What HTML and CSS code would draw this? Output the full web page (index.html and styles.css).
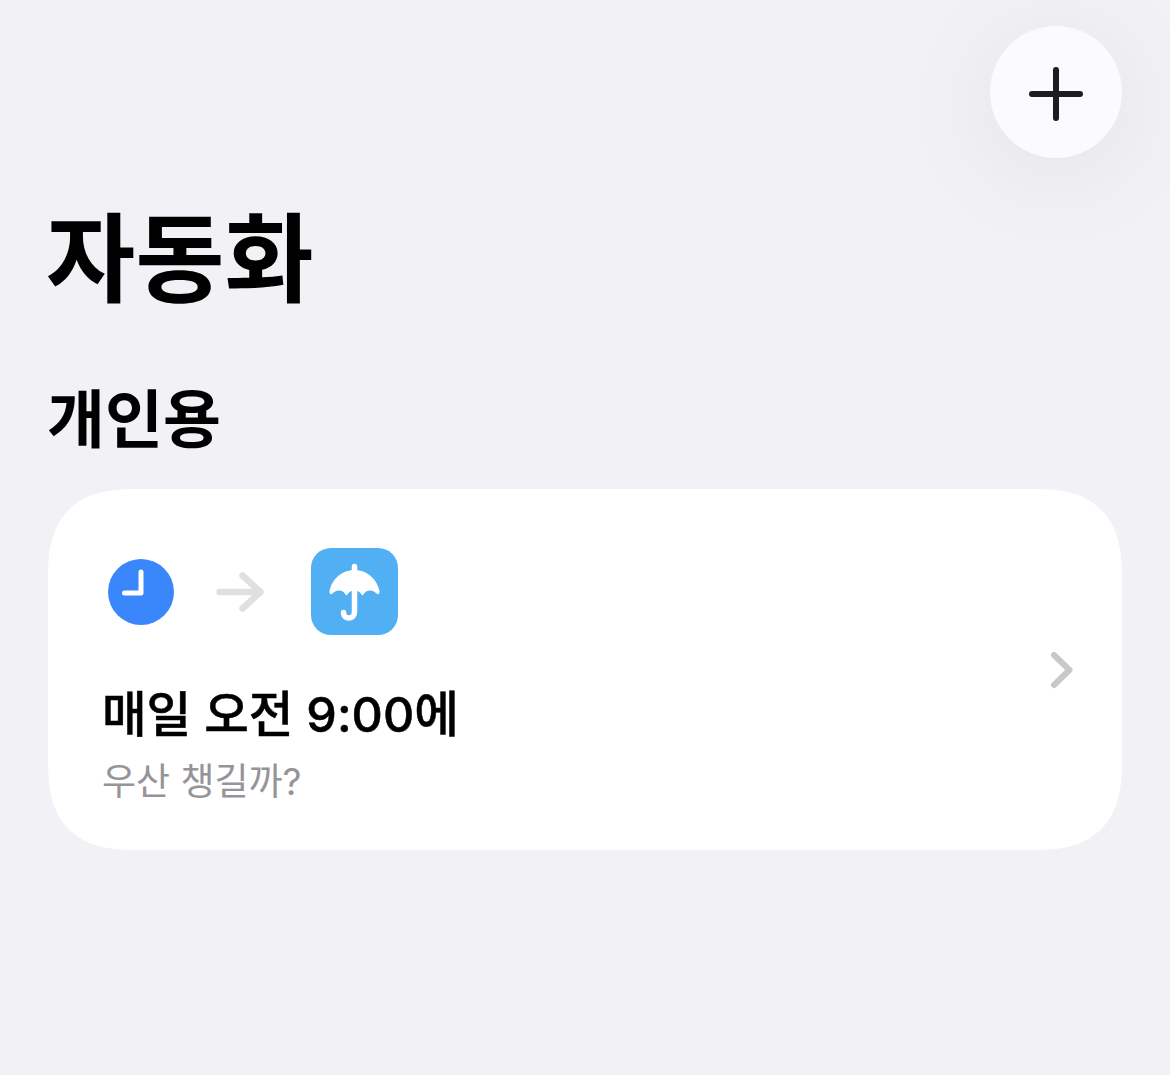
FILE: index.html

```html
<!DOCTYPE html>
<html lang="ko">
<head>
    <meta charset="UTF-8" />
    <title>자동화</title>
    <link rel="stylesheet" href="styles.css">
</head>
<body>

<div class="topbar">
  <button class="add-btn" aria-label="추가">
    <svg class="plus" width="54" height="54" viewBox="0 0 54 54">
      <path d="M27 3V51M3 27H51" fill="none" stroke="#1c1c22" stroke-width="6" stroke-linecap="round" />
    </svg>
  </button>
</div>

<h1>자동화</h1>
<h2>개인용</h2>

<div class="card">
  <div class="card-body">
    <div class="icons">
      <svg class="clock" width="66" height="66" viewBox="0 0 66 66">
        <circle cx="33" cy="33" r="33" fill="#3a86fb" />
        <path d="M33 13V34H16.500" fill="none" stroke="#fff" stroke-width="5" stroke-linecap="round" stroke-linejoin="round" />
      </svg>
      <svg class="arrow" width="50" height="40" viewBox="0 0 50 40">
        <path d="M4.500 20H45.500M27.500 3.500L45.500 20L27.500 36.500" fill="none" stroke="#e0e0e0" stroke-width="6.500" stroke-linecap="round" stroke-linejoin="round" />
      </svg>
      <svg class="umbrella" width="87" height="87" viewBox="0 0 87 87">
        <rect width="87" height="87" rx="20" fill="#50b0f3" />
        <path d="M43.500 22C56 22 66 31 68.500 43C69 46 67 47 65.500 45.500C63.500 43.500 61.500 42.500 59 42.500C56 42.500 54 44 52.500 46.500C52 47.500 51 47.500 50.500 46.500C49 44 46.500 42.500 43.500 42.500C40.500 42.500 38 44 36.500 46.500C36 47.500 35 47.500 34.500 46.500C33 44 31 42.500 28 42.500C25.500 42.500 23.500 43.500 21.500 45.500C20 47 18 46 18.500 43C21 31 31 22 43.500 22Z" fill="#fff" />
        <path d="M43.500 18.500V25M43.500 40V63.500C43.500 67.500 41.500 70 38 70C34.500 70 32.500 68 32.500 64.500" fill="none" stroke="#fff" stroke-width="5.500" stroke-linecap="round" />
      </svg>
    </div>
    <div class="card-title">매일 오전 9:00에</div>
    <div class="card-sub">우산 챙길까?</div>
  </div>
  <svg class="chevron" width="24" height="38" viewBox="0 0 24 38">
    <path d="M4 4L19.500 19L4 34" fill="none" stroke="#c8c8ca" stroke-width="6" stroke-linecap="round" stroke-linejoin="round" />
  </svg>
</div>

</body>
</html>
```

FILE: styles.css

```css
body {
  margin: 0;
  padding: 26px 48px 0 48px;
  background: #f1f1f6;
  color: #000;
  font-family: "Inter", "Noto Sans CJK KR", "Liberation Sans", sans-serif;
  overflow: hidden;
}
.topbar {
  display: flex;
  justify-content: flex-end;
}
.add-btn {
  display: flex;
  align-items: center;
  justify-content: center;
  width: 132px;
  height: 132px;
  padding: 0;
  border: none;
  border-radius: 50%;
  background: #fbfbfe;
  box-shadow: 0 14px 110px rgba(0, 0, 0, 0.075);
}
.plus {
  margin-top: 4px;
}
h1 {
  margin: 37px 0 0 -2px;
  font-size: 97px;
  line-height: 128px;
  font-weight: 700;
}
h2 {
  margin: 52px 0 0 -1px;
  font-size: 63px;
  line-height: 88px;
  font-weight: 700;
}
.card {
  display: flex;
  align-items: center;
  justify-content: space-between;
  box-sizing: border-box;
  height: 361px;
  margin-top: 26px;
  padding: 0 48px 0 55px;
  background: #fff;
  border-radius: 90px;
  corner-shape: superellipse(1.4);
}
.card-body {
  padding-top: 17px;
}
.icons {
  display: flex;
  align-items: center;
  padding-left: 5px;
}
.arrow {
  margin: 0 46px 0 41px;
}
.card-title {
  margin-top: 46px;
  margin-left: -1px;
  font-size: 48.500px;
  line-height: 68px;
  font-weight: 500;
  -webkit-text-stroke: 0.5px #000;
}
.card-sub {
  margin-top: 7px;
  margin-left: -1px;
  font-size: 37px;
  line-height: 52px;
  color: #949499;
}
```
